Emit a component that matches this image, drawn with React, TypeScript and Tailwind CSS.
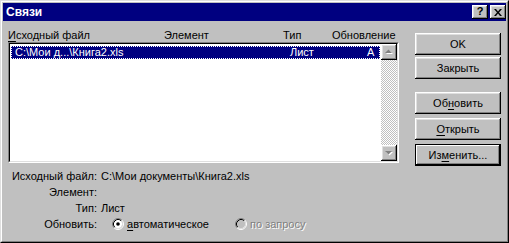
import React from 'react';

const bevel =
  'shadow-[inset_-1px_-1px_0_#000,inset_1px_1px_0_#fff,inset_-2px_-2px_0_#808080,inset_2px_2px_0_#dfdfdf]';

const Radio: React.FC<{ checked?: boolean; disabled?: boolean }> = ({ checked, disabled }) => (
  <svg width="12" height="12" viewBox="0 0 12 12" className="shrink-0">
    <circle cx="6" cy="6" r="4.2" fill={disabled ? '#c0c0c0' : '#fff'} />
    <path d="M2.11 9.89 A5.5 5.5 0 0 1 9.89 2.11" stroke="#808080" fill="none" />
    <path d="M9.89 2.11 A5.5 5.5 0 0 1 2.11 9.89" stroke="#fff" fill="none" />
    <path d="M2.82 9.18 A4.5 4.5 0 0 1 9.18 2.82" stroke="#000" fill="none" />
    <path d="M9.18 2.82 A4.5 4.5 0 0 1 2.82 9.18" stroke="#dfdfdf" fill="none" />
    {checked && <circle cx="6" cy="6" r="1.8" fill="#000" />}
  </svg>
);

const Button: React.FC<{ children: React.ReactNode; isDefault?: boolean; className?: string }> = ({
  children,
  isDefault,
  className = '',
}) => (
  <div
    className={
      'w-[86px] h-[22px] flex items-center justify-center bg-[#c0c0c0] text-black ' +
      (isDefault
        ? 'border border-black shadow-[inset_-1px_-1px_0_#000,inset_1px_1px_0_#fff,inset_-2px_-2px_0_#808080] '
        : bevel + ' ') +
      className
    }
  >
    {children}
  </div>
);

const U: React.FC<{ children: React.ReactNode }> = ({ children }) => <span className="underline underline-offset-[2px]">{children}</span>;

const Arrow: React.FC<{ down?: boolean }> = ({ down }) => (
  <svg width="16" height="16" viewBox="0 0 16 16">
    {down ? (
      <>
        <polygon points="5,7 12,7 8.5,10.5" fill="#fff" />
        <polygon points="4,6 11,6 7.5,9.5" fill="#808080" />
      </>
    ) : (
      <>
        <polygon points="5,10 12,10 8.5,6.5" fill="#fff" />
        <polygon points="4,9 11,9 7.5,5.5" fill="#808080" />
      </>
    )}
  </svg>
);

export default function App() {
  return (
    <div className="w-[509px] h-[243px] bg-[#c0c0c0] border border-t-[#dfdfdf] border-l-[#dfdfdf] border-r-black border-b-black font-['Liberation_Sans',sans-serif] text-[11px] text-black leading-[14px] select-none">
      <div className="h-full border border-t-white border-l-white border-r-[#808080] border-b-[#808080] p-px flex flex-col">
        {/* Title bar */}
        <div className="h-[18px] bg-[#000080] flex items-center justify-between pl-[3px]">
          <span className="text-white font-bold text-[12px]">Связи</span>
          <div className="flex gap-[2px]">
            <div className={'w-[16px] h-[14px] bg-[#c0c0c0] flex items-center justify-center font-bold text-[11px] leading-none pb-[1px] ' + bevel}>?</div>
            <div className={'w-[16px] h-[14px] bg-[#c0c0c0] flex items-center justify-center ' + bevel}>
              <svg width="8" height="7" viewBox="0 0 8 7">
                <path d="M0 0h2l2 2.5L6 0h2L5 3.5 8 7H6L4 4.5 2 7H0l3-3.5z" fill="#000" />
              </svg>
            </div>
          </div>
        </div>

        {/* Body */}
        <div className="flex pl-[5px]">
          <div className="w-[391px] flex flex-col">
            <div className="flex h-[14px] mt-[7px]">
              <span className="w-[156px]"><U>И</U>сходный файл</span>
              <span className="w-[119px]">Элемент</span>
              <span className="w-[49px]">Тип</span>
              <span>Обновление</span>
            </div>

            {/* List box */}
            <div className="h-[121px] border border-t-[#808080] border-l-[#808080] border-r-white border-b-white">
              <div className="h-full border border-t-black border-l-black border-r-[#dfdfdf] border-b-[#dfdfdf] bg-white flex">
                <div className="flex-1 pl-px pr-px pt-[2px]">
                  <div className="h-[13px] bg-[#000080] text-white border border-dotted border-white flex items-center leading-[11px]">
                    <span className="w-[278px] pl-[3px]">C:\Мои д...\Книга2.xls</span>
                    <span className="w-[77px]">Лист</span>
                    <span>A</span>
                  </div>
                </div>
                <div className="w-[16px] flex flex-col bg-[repeating-conic-gradient(#c0c0c0_0_25%,#fff_0_50%)] bg-[length:2px_2px]">
                  <div className={'w-[16px] h-[16px] bg-[#c0c0c0] ' + bevel}><Arrow /></div>
                  <div className="flex-1" />
                  <div className={'w-[16px] h-[16px] bg-[#c0c0c0] ' + bevel}><Arrow down /></div>
                </div>
              </div>
            </div>

            {/* Details */}
            <div className="mt-[5px] flex flex-col">
              <div className="flex h-[16px] items-center">
                <span className="w-[89px] text-right">Исходный файл:</span>
                <span className="ml-[4px]">C:\Мои документы\Книга2.xls</span>
              </div>
              <div className="flex h-[16px] items-center">
                <span className="w-[89px] text-right">Элемент:</span>
              </div>
              <div className="flex h-[16px] items-center">
                <span className="w-[89px] text-right">Тип:</span>
                <span className="ml-[4px]">Лист</span>
              </div>
              <div className="flex h-[16px] items-center">
                <span className="w-[89px] text-right">Обновить:</span>
                <div className="ml-[15px] flex items-center">
                  <div className="w-[123px] flex items-center gap-[3px]">
                    <Radio checked />
                    <span><U>а</U>втоматическое</span>
                  </div>
                  <div className="flex items-center gap-[3px]">
                    <Radio disabled />
                    <span className="text-[#808080] [text-shadow:1px_1px_0_#fff]">по запросу</span>
                  </div>
                </div>
              </div>
            </div>
          </div>

          {/* Buttons */}
          <div className="ml-[16px] pt-[12px] flex flex-col">
            <Button>OK</Button>
            <Button className="mt-[2px]">Закрыть</Button>
            <Button className="mt-[13px]">Об<U>н</U>овить</Button>
            <Button className="mt-[4px]"><U>О</U>ткрыть</Button>
            <Button isDefault className="mt-[4px]">Из<U>м</U>енить...</Button>
          </div>
        </div>
      </div>
    </div>
  );
}
